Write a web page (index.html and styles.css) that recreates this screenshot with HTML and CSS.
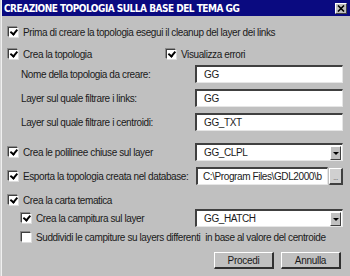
FILE: index.html
```html
<!DOCTYPE html>
<html lang="it">
<head>
    <meta charset="UTF-8">
    <title>Creazione topologia</title>
    <link rel="stylesheet" href="styles.css">
</head>
<body>
    <div class="window">
        <div class="title-bar">
            <span class="title-text">CREAZIONE TOPOLOGIA SULLA BASE DEL TEMA GG</span>
            <span class="close-btn">
                <svg width="8" height="7" viewBox="0 0 8 7"><path d="M1 0.5 L7 6.5 M7 0.5 L1 6.5" stroke="#000" stroke-width="1.6"/></svg>
            </span>
        </div>

        <div class="content">
            <div class="row r-first">
                <label class="check"><span class="box on"></span>Prima di creare la topologia esegui il cleanup del layer dei links</label>
            </div>

            <div class="row r-topo">
                <label class="check check-left"><span class="box on"></span>Crea la topologia</label>
                <label class="check"><span class="box on"></span>Visualizza errori</label>
            </div>

            <div class="row r-input1">
                <span class="label">Nome della topologia da creare:</span>
                <div class="field"><span class="value">GG</span></div>
            </div>
            <div class="row r-gap">
                <span class="label">Layer sul quale filtrare i links:</span>
                <div class="field"><span class="value">GG</span></div>
            </div>
            <div class="row r-gap">
                <span class="label">Layer sul quale filtrare i centroidi:</span>
                <div class="field"><span class="value">GG_TXT</span></div>
            </div>

            <div class="row r-poly">
                <label class="check"><span class="box on"></span>Crea le polilinee chiuse sul layer</label>
                <div class="field select"><span class="value">GG_CLPL</span><span class="drop"></span></div>
            </div>

            <div class="row r-gap">
                <label class="check"><span class="box on"></span>Esporta la topologia creata nel database:</label>
                <div class="path-group">
                    <div class="field path"><span class="value">C:\Program Files\GDL2000\b</span></div>
                    <span class="browse">...</span>
                </div>
            </div>

            <div class="row r-gap">
                <label class="check"><span class="box on"></span>Crea la carta tematica</label>
            </div>

            <div class="row r-hatch sub">
                <label class="check"><span class="box on"></span>Crea la campitura sul layer</label>
                <div class="field select"><span class="value">GG_HATCH</span><span class="drop"></span></div>
            </div>

            <div class="row r-split sub">
                <label class="check"><span class="box"></span>Suddividi le campiture su layers differenti&nbsp; in base al valore del centroide</label>
            </div>

            <div class="actions">
                <button class="btn">Procedi</button>
                <button class="btn">Annulla</button>
            </div>
        </div>
    </div>
</body>
</html>
```

FILE: styles.css
```css
html, body {
    margin: 0;
    padding: 0;
}
body {
    width: 350px;
    height: 276px;
    overflow: hidden;
    background-color: #c0c0c0;
    font-family: "Liberation Sans", Arial, sans-serif;
    font-size: 10px;
    letter-spacing: -0.4px;
    color: #1a1a1a;
}
.window {
    display: flex;
    flex-direction: column;
    height: 276px;
    border-left: 1px solid #d6d6d6;
    box-shadow: inset 1px 0 0 #f0f0f0;
    padding-left: 1px;
}
.title-bar {
    display: flex;
    align-items: center;
    justify-content: space-between;
    height: 16px;
    background-color: #0a0a80;
    padding: 0 3px 0 2px;
}
.title-text {
    color: white;
    font-family: "DejaVu Sans Condensed", "DejaVu Sans", sans-serif;
    font-weight: bold;
    font-size: 10px;
    letter-spacing: -0.5px;
}
.close-btn {
    display: flex;
    align-items: center;
    justify-content: center;
    width: 10px;
    height: 9px;
    background-color: #c0c0c0;
    border-top: 1px solid #fff;
    border-left: 1px solid #fff;
    border-right: 1px solid #404040;
    border-bottom: 1px solid #404040;
}

.content {
    display: flex;
    flex-direction: column;
    padding-left: 6px;
}
.row {
    display: flex;
    align-items: center;
    height: 18px;
    margin-top: 6px;
}
.r-first { margin-top: 7px; }
.r-topo { margin-top: 4px; }
.r-input1 { margin-top: 2px; }
.r-gap { margin-top: 6px; }
.r-poly { margin-top: 12px; }
.r-hatch { margin-top: 0; }
.r-split { margin-top: 1px; }
.sub { padding-left: 13px; }

.check {
    display: flex;
    align-items: center;
    white-space: nowrap;
}
.check-left {
    width: 158px;
}
.box {
    flex-shrink: 0;
    width: 8px;
    height: 8px;
    margin-right: 5px;
    background-color: #fff;
    border-top: 1px solid #404040;
    border-left: 1px solid #404040;
    border-right: 1px solid #fff;
    border-bottom: 1px solid #fff;
    box-shadow: -1px -1px 0 #8a8a8a, 1px 1px 0 #dcdcdc;
    position: relative;
}
.box.on::after {
    content: "";
    position: absolute;
    left: 1px;
    top: 0px;
    width: 3px;
    height: 5px;
    border-right: 2px solid #000;
    border-bottom: 2px solid #000;
    transform: rotate(40deg) translate(1px, -1px);
}
.label {
    padding-left: 13px;
    white-space: nowrap;
}

.field {
    box-sizing: border-box;
    flex-shrink: 0;
    display: flex;
    align-items: center;
    margin-left: auto;
    margin-right: 7px;
    width: 148px;
    height: 18px;
    background-color: #fff;
    border-top: 2px solid #404040;
    border-left: 2px solid #404040;
    border-right: 1px solid #e6e6e6;
    border-bottom: 1px solid #e6e6e6;
    overflow: hidden;
    white-space: nowrap;
}
.value {
    padding-left: 7px;
    flex-grow: 1;
    overflow: hidden;
}
.select .drop {
    box-sizing: border-box;
    flex-shrink: 0;
    width: 11px;
    height: 14px;
    margin-right: 1px;
    background-color: #c0c0c0;
    border-top: 1px solid #fff;
    border-left: 1px solid #fff;
    border-right: 1px solid #404040;
    border-bottom: 1px solid #404040;
    position: relative;
}
.select .drop::after {
    content: "";
    position: absolute;
    left: 2px;
    top: 5px;
    border-left: 3px solid transparent;
    border-right: 3px solid transparent;
    border-top: 3px solid #000;
}
.path-group {
    flex-shrink: 0;
    display: flex;
    align-items: center;
    margin-left: auto;
    margin-right: 7px;
}
.field.path {
    width: 132px;
    margin: 0;
}
.field.path .value {
    padding-left: 5px;
}
.browse {
    box-sizing: border-box;
    width: 14px;
    height: 17px;
    margin-left: 1px;
    background-color: #d0d0d0;
    border-top: 1px solid #fff;
    border-left: 1px solid #fff;
    border-right: 2px solid #404040;
    border-bottom: 2px solid #404040;
    font-size: 7px;
    line-height: 18px;
    text-align: center;
    color: #555;
}

.actions {
    display: flex;
    justify-content: flex-end;
    gap: 7px;
    margin-top: 6px;
    padding-right: 9px;
}
.btn {
    box-sizing: border-box;
    width: 60px;
    height: 17px;
    padding: 0;
    font-family: "Liberation Sans", Arial, sans-serif;
    font-size: 10px;
    letter-spacing: -0.3px;
    color: #1a1a1a;
    background-color: #c0c0c0;
    border-top: 1px solid #fff;
    border-left: 1px solid #fff;
    border-right: 2px solid #303030;
    border-bottom: 2px solid #303030;
}
```
